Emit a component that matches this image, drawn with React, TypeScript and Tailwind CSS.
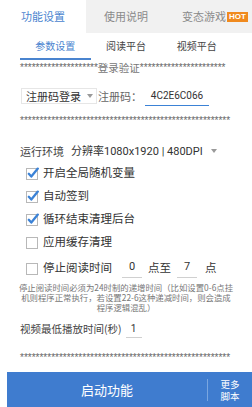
import React from "react";

const starFont = { fontFamily: "'Liberation Sans', sans-serif" };

function Check({ checked }: { checked: boolean }) {
  return (
    <svg width="14" height="14" viewBox="0 0 14 14" className="shrink-0">
      <rect x="1.5" y="2.5" width="11" height="11" fill="#fff" stroke="#b8b8b8" strokeWidth="1" />
      {checked && (
        <path d="M3.8 7.8 L6.3 10.6 L12.8 2.6" fill="none" stroke="#3b82d6" strokeWidth="2.3" strokeLinecap="round" strokeLinejoin="round" />
      )}
    </svg>
  );
}

function Arrow() {
  return (
    <svg width="6" height="4" viewBox="0 0 6 4" className="shrink-0">
      <path d="M0 0 L6 0 L3 4 Z" fill="#9a9a9a" />
    </svg>
  );
}

function Stars({ n }: { n: number }) {
  return (
    <span className="whitespace-nowrap text-[10px] leading-[10px] text-[#666]" style={starFont}>
      {"*".repeat(n)}
    </span>
  );
}

export default function App() {
  return (
    <div
      className="w-[252px] h-[407px] bg-white flex flex-col overflow-hidden text-[#333]"
      style={{ fontFamily: "'Noto Sans CJK SC', 'Noto Sans', sans-serif" }}
    >
      {/* Top tabs */}
      <div className="flex h-[33px] shrink-0">
        <div className="w-[86px] bg-white flex items-center justify-center text-[11px] text-[#4a84cf]">功能设置</div>
        <div className="flex-1 bg-[#f1f1f1] flex items-center">
          <div className="w-[80px] flex justify-center text-[11px] text-[#8a8a8a]">使用说明</div>
          <div className="flex items-center ml-[16px]">
            <span className="text-[11px] text-[#8a8a8a]">变态游戏</span>
            <span className="ml-[1px] bg-[#f08a1e] text-white text-[8px] leading-[10px] px-[2px] font-bold" style={starFont}>HOT</span>
          </div>
        </div>
      </div>

      {/* Sub tabs */}
      <div className="flex h-[27px] shrink-0 px-[20px]">
        <div className="w-[73px] flex flex-col items-center justify-end">
          <span className="text-[10px] leading-[14px] text-[#4a84cf]">参数设置</span>
          <div className="mt-[5px] h-[2px] w-full bg-[#4a84cf]" />
        </div>
        <div className="w-[73px] flex items-end justify-center pb-[7px]">
          <span className="text-[10px] leading-[14px] text-[#444]">阅读平台</span>
        </div>
        <div className="w-[73px] flex items-end justify-center pb-[7px]">
          <span className="text-[10px] leading-[14px] text-[#444]">视频平台</span>
        </div>
      </div>

      <div className="mt-[2px] px-[20px] h-[12px] flex items-center shrink-0">
        <Stars n={20} />
        <span className="text-[10.5px] leading-[12px] text-[#777] shrink-0">登录验证</span>
        <Stars n={22} />
      </div>

      {/* Register row */}
      <div className="mt-[14px] flex items-center px-[21px] h-[16px] shrink-0">
        <div className="flex items-center h-[16px] border border-[#e6e6e6] pl-[4px] pr-[3px] w-[76px]">
          <span className="text-[11px] leading-[14px] text-[#333]">注册码登录</span>
          <span className="ml-auto"><Arrow /></span>
        </div>
        <span className="ml-[1px] text-[11px] text-[#666]">注册码：</span>
        <div className="ml-[3px] w-[64px] h-[20px] flex items-center justify-center border-b border-[#3b82d6]">
          <span className="text-[10px] text-[#333]" style={{ fontFamily: "'Roboto', sans-serif" }}>4C2E6C066</span>
        </div>
      </div>

      <div className="mt-[12px] px-[20px] h-[10px] flex items-center shrink-0">
        <Stars n={54} />
      </div>

      {/* Runtime row */}
      <div className="mt-[17px] flex items-center px-[20px] h-[16px] shrink-0">
        <span className="text-[11px] text-[#444]">运行环境</span>
        <span className="ml-[7px] text-[11px] text-[#333]">分辨率<span style={{ fontFamily: "'Roboto', sans-serif" }}>1080x1920 | 480DPI</span></span>
        <span className="ml-[8px]"><Arrow /></span>
      </div>

      {/* Checkboxes */}
      <div className="mt-[2px] flex flex-col px-[25px] shrink-0">
        {[
          ["开启全局随机变量", true],
          ["自动签到", true],
          ["循环结束清理后台", true],
          ["应用缓存清理", false],
        ].map(([t, c]) => (
          <div key={t as string} className="flex items-center h-[23px] gap-[4px]">
            <Check checked={c as boolean} />
            <span className="text-[11.5px] text-[#333]">{t as string}</span>
          </div>
        ))}
        <div className="flex items-center h-[27px] gap-[4px] mt-[1px]">
          <Check checked={false} />
          <span className="text-[11.5px] text-[#333]">停止阅读时间</span>
          <div className="ml-[6px] w-[20px] h-[20px] flex items-center justify-center border-b border-[#d0d0d0]">
            <span className="text-[11px]" style={{ fontFamily: "'Roboto', sans-serif" }}>0</span>
          </div>
          <span className="ml-[2px] text-[11.5px]">点至</span>
          <div className="ml-[2px] w-[20px] h-[20px] flex items-center justify-center border-b border-[#d0d0d0]">
            <span className="text-[11px]" style={{ fontFamily: "'Roboto', sans-serif" }}>7</span>
          </div>
          <span className="ml-[4px] text-[11.5px]">点</span>
        </div>
      </div>

      {/* Note */}
      <p className="mt-[1px] text-center text-[8.4px] leading-[10px] text-[#777] whitespace-nowrap shrink-0">
        停止阅读时间必须为24时制的递增时间（比如设置0-6点挂
        <br />
        机则程序正常执行，若设置22-6这种递减时间，则会造成
        <br />
        程序逻辑混乱）
      </p>

      {/* Video row */}
      <div className="mt-[7px] flex items-center px-[20px] h-[20px] shrink-0">
        <span className="text-[10.5px] text-[#444]">视频最低播放时间(秒)</span>
        <div className="ml-[4px] w-[16px] h-[18px] flex items-center justify-center border-b border-[#d0d0d0]">
          <span className="text-[10px]" style={{ fontFamily: "'Roboto', sans-serif" }}>1</span>
        </div>
      </div>

      <div className="mt-[14px] px-[20px] h-[10px] flex items-center shrink-0">
        <Stars n={54} />
      </div>

      {/* Bottom button */}
      <div className="mt-auto ml-[7px] h-[35px] bg-[#3f7ccf] flex items-center text-white shrink-0">
        <div className="flex-1 flex justify-center text-[13px]">启动功能</div>
        <div className="w-px h-[22px] bg-[#7aa6e0]" />
        <p className="w-[44px] text-center text-[9.5px] leading-[12px]">
          更多
          <br />
          脚本
        </p>
      </div>
    </div>
  );
}
